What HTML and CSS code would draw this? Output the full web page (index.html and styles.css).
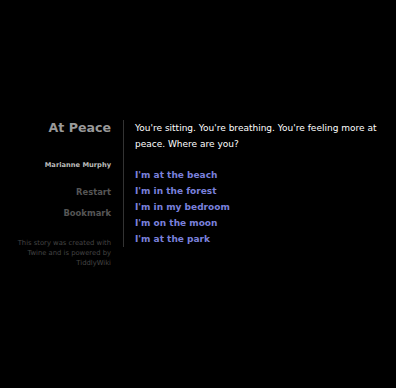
FILE: index.html
```html
<!DOCTYPE html>
<html lang="en">
<head>
  <meta charset="UTF-8" />
  <title>At Peace</title>
  <link rel="stylesheet" href="styles.css">
</head>
<body>
  <div class="story">
    <div class="sidebar">
      <h1 class="title">At Peace</h1>
      <div class="author">Marianne Murphy</div>
      <ul class="menu">
        <li>Restart</li>
        <li>Bookmark</li>
      </ul>
      <p class="credits">This story was created with Twine and is powered by TiddlyWiki</p>
    </div>
    <div class="passage">
      <p>You're sitting. You're breathing. You're feeling more at peace. Where are you?</p>
      <ul class="choices">
        <li><a href="#">I'm at the beach</a></li>
        <li><a href="#">I'm in the forest</a></li>
        <li><a href="#">I'm in my bedroom</a></li>
        <li><a href="#">I'm on the moon</a></li>
        <li><a href="#">I'm at the park</a></li>
      </ul>
    </div>
  </div>
</body>
</html>
```

FILE: styles.css
```css
* {
  margin: 0;
  padding: 0;
  box-sizing: border-box;
}
body {
  background: #000;
  color: #fff;
  font-family: "DejaVu Sans", Verdana, sans-serif;
}
.story {
  display: flex;
  padding-top: 120px;
}
.sidebar {
  flex: 0 0 111px;
  text-align: right;
}
.title {
  font-size: 12.6px;
  color: #999;
  line-height: 16px;
  margin-bottom: 25px;
}
.author {
  font-size: 6.7px;
  font-weight: bold;
  color: #bbb;
  margin-bottom: 13px;
}
.menu {
  list-style: none;
  font-size: 8.4px;
  font-weight: bold;
  color: #555;
}
.menu li {
  line-height: 21px;
}
.credits {
  margin-top: 14px;
  font-size: 6.8px;
  line-height: 10px;
  color: #444;
}
.passage {
  flex: 0 0 262px;
  margin-left: 12px;
  border-left: 1px solid #333;
  padding-left: 11px;
  height: 127px;
  font-size: 9px;
  line-height: 16px;
}
.passage p {
  margin-bottom: 15px;
}
.choices {
  list-style: none;
}
.choices li {
  line-height: 16px;
}
.choices a {
  color: #7a80dc;
  font-weight: bold;
  text-decoration: none;
}
```
